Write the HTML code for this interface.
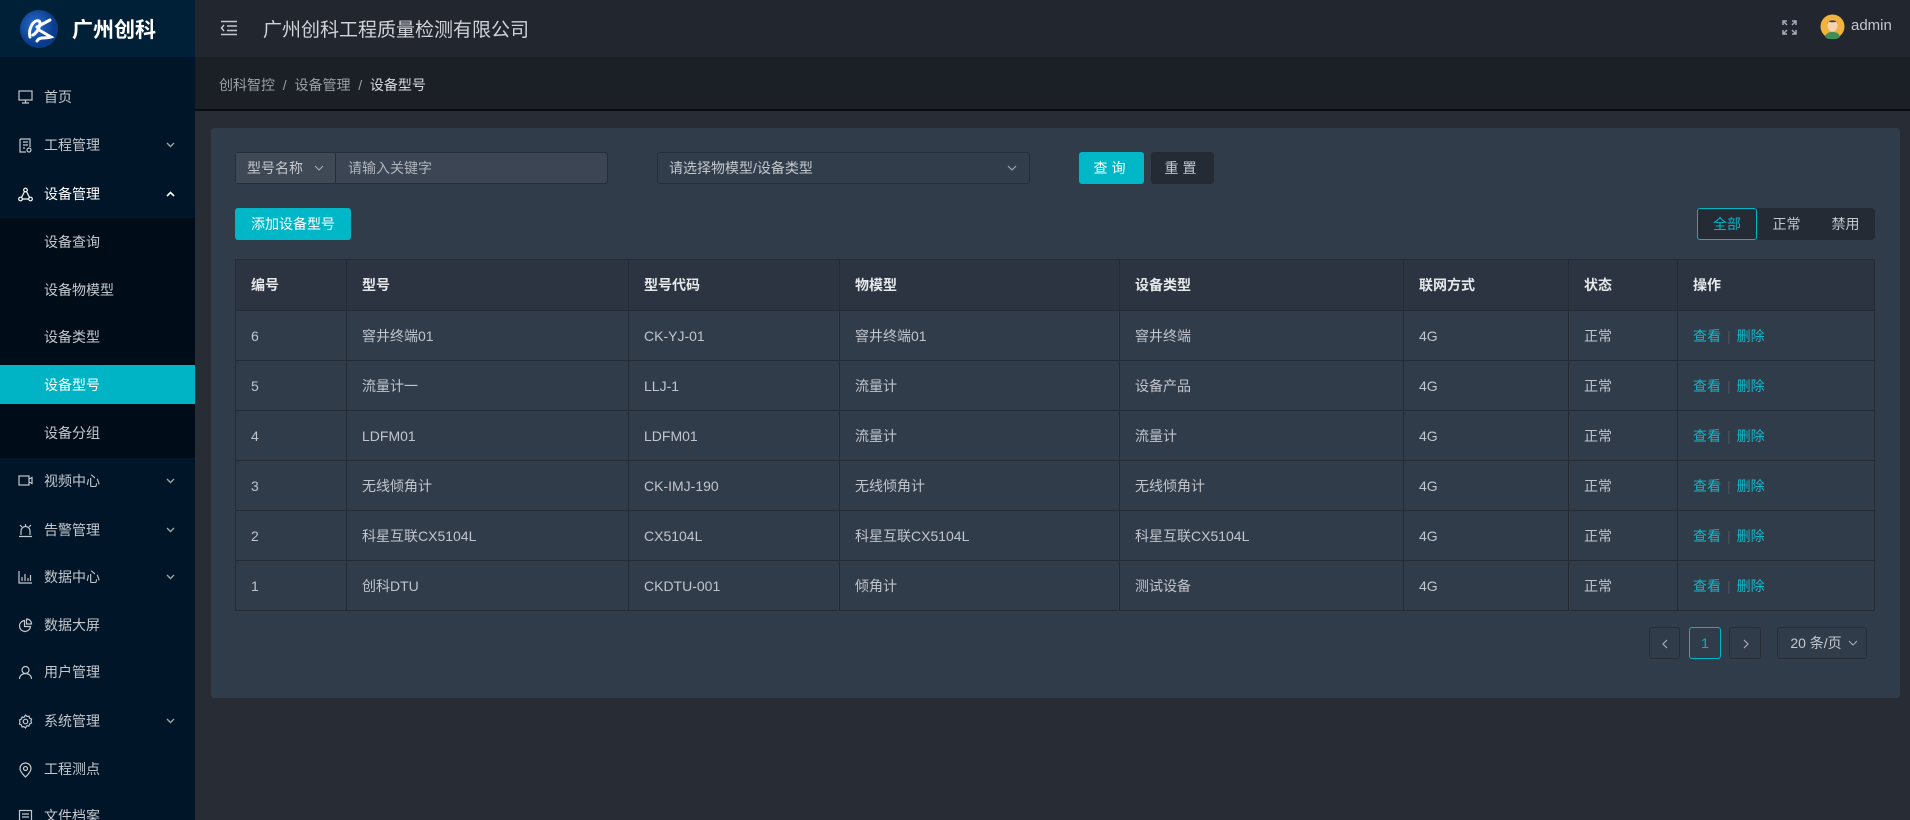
<!DOCTYPE html>
<html><head><meta charset="utf-8"><style>
*{box-sizing:border-box;margin:0;padding:0}
html{width:1910px;height:820px;overflow:hidden}
body{width:1910px;height:820px;overflow:hidden;background:#272c35;font-family:"Liberation Sans","Noto Sans CJK SC",sans-serif;color:#c0c4cc;position:relative}
.abs{position:absolute}
#side{left:0;top:0;width:195px;height:820px;background:#001527;overflow:hidden}
#logo{left:0;top:0;width:195px;height:57px;background:#002038}
.mi{position:absolute;left:0;width:195px;height:48px;line-height:48px;font-size:14px;color:#c4c8ce}
.mi .t{position:absolute;left:44px}
.mi svg{position:absolute;left:18px;top:17px}
.mi svg.ar{left:166px;top:21px}
#sub{left:0;top:218px;width:195px;height:240px;background:#000c17}
#hdr{left:195px;top:0;width:1715px;height:57px;background:#21262f}
#bc{left:195px;top:57px;width:1715px;height:54px;background:#1b1f26;border-bottom:2px solid #0a0c10}
#card{left:211px;top:128px;width:1689px;height:570px;background:#313c4a;border-radius:3px}
table{border-collapse:collapse;position:absolute;left:235px;top:259px;width:1640px;font-size:14px}
td,th{border:1px solid #242b35;padding-left:15px;text-align:left;height:50px}
th{background:#2b3440;color:#e6e8eb;font-weight:bold;height:51px}
td{color:#c0c4cc}
.op{color:#12b7c9}
.sep{color:#4a5260;margin:0 6px}
.btn{position:absolute;border-radius:3px;text-align:center;font-size:14px}
</style></head><body>
<div id="side" class="abs">
<div id="logo" class="abs">
<svg class="abs" style="left:20px;top:10px" width="38" height="38" viewBox="0 0 38 38"><defs><radialGradient id="g" cx="40%" cy="40%"><stop offset="0" stop-color="#2a6fd0"/><stop offset="1" stop-color="#0b3c8c"/></radialGradient></defs><circle cx="19" cy="19" r="19" fill="url(#g)"/><path d="M10 27 C8 18 14 9 19 11 C22 13 18 22 13 25 M17 17 L30 10 M19 20 L31 27 C25 29 20 26 17 31" stroke="#fff" stroke-width="3" fill="none" stroke-linecap="round"/></svg>
<div class="abs" style="left:72px;top:14px;font-size:21px;font-weight:bold;color:#fff">广州创科</div>
</div>
<div id="sub" class="abs"></div>
<div class="abs" style="left:0;top:365px;width:195px;height:39px;background:#00b4c6"></div>
<div class="mi" style="top:73px"><svg width="15" height="14" viewBox="0 0 15 14" fill="none" stroke="#c4c8ce" stroke-width="1.2"><rect x="1" y="1" width="13" height="9"/><path d="M7.5 10v3M4 13h7"/></svg><span class="t">首页</span></div>
<div class="mi" style="top:121px"><svg width="15" height="15" viewBox="0 0 15 15" fill="none" stroke="#c4c8ce" stroke-width="1.2"><path d="M2 1h10v8M2 1v13h6M5 4h5M5 7h5M5 10h2"/><circle cx="11" cy="12" r="2"/></svg><span class="t">工程管理</span><svg class="ar" width="9" height="6" viewBox="0 0 9 6" fill="none" stroke="#9aa" stroke-width="1.4"><path d="M1 1l3.5 3.5L8 1"/></svg></div>
<div class="mi" style="top:170px;color:#fff"><svg width="15" height="15" viewBox="0 0 15 15" fill="none" stroke="#fff" stroke-width="1.2"><circle cx="7.5" cy="3" r="1.8"/><circle cx="2.5" cy="12" r="1.8"/><circle cx="12.5" cy="12" r="1.8"/><path d="M6.5 4.5 3.5 10.5M8.5 4.5l3 6M4.3 12h6.4"/></svg><span class="t">设备管理</span><svg class="ar" width="9" height="6" viewBox="0 0 9 6" fill="none" stroke="#fff" stroke-width="1.6"><path d="M1 5l3.5-3.5L8 5"/></svg></div>
<div class="mi" style="top:218px"><span class="t">设备查询</span></div>
<div class="mi" style="top:266px"><span class="t">设备物模型</span></div>
<div class="mi" style="top:313px"><span class="t">设备类型</span></div>
<div class="mi" style="top:361px;color:#fff"><span class="t">设备型号</span></div>
<div class="mi" style="top:409px"><span class="t">设备分组</span></div>
<div class="mi" style="top:457px"><svg width="15" height="13" viewBox="0 0 15 13" fill="none" stroke="#c4c8ce" stroke-width="1.2"><rect x="1" y="2" width="10" height="9"/><path d="M11 5l3-1.5v6L11 8"/></svg><span class="t">视频中心</span><svg class="ar" width="9" height="6" viewBox="0 0 9 6" fill="none" stroke="#9aa" stroke-width="1.4"><path d="M1 1l3.5 3.5L8 1"/></svg></div>
<div class="mi" style="top:506px"><svg width="15" height="15" viewBox="0 0 15 15" fill="none" stroke="#c4c8ce" stroke-width="1.2"><path d="M3 12V8a4.5 4.5 0 0 1 9 0v4M1 13.5h13M2 2l2 2M13 2l-2 2M7.5 1v2"/></svg><span class="t">告警管理</span><svg class="ar" width="9" height="6" viewBox="0 0 9 6" fill="none" stroke="#9aa" stroke-width="1.4"><path d="M1 1l3.5 3.5L8 1"/></svg></div>
<div class="mi" style="top:553px"><svg width="15" height="14" viewBox="0 0 15 14" fill="none" stroke="#c4c8ce" stroke-width="1.2"><path d="M1 1v12h13M4 11V7M7 11V4M10 11V8M12.5 11V5"/></svg><span class="t">数据中心</span><svg class="ar" width="9" height="6" viewBox="0 0 9 6" fill="none" stroke="#9aa" stroke-width="1.4"><path d="M1 1l3.5 3.5L8 1"/></svg></div>
<div class="mi" style="top:601px"><svg width="15" height="15" viewBox="0 0 15 15" fill="none" stroke="#c4c8ce" stroke-width="1.2"><path d="M6.5 2.5A5.5 5.5 0 1 0 12.5 8.5H6.5z"/><path d="M8.5 1v5h5A5 5 0 0 0 8.5 1z"/></svg><span class="t">数据大屏</span></div>
<div class="mi" style="top:648px"><svg width="15" height="15" viewBox="0 0 15 15" fill="none" stroke="#c4c8ce" stroke-width="1.2"><circle cx="7.5" cy="5" r="3.5"/><path d="M1.5 14c0-3.5 3-5.5 6-5.5s6 2 6 5.5"/></svg><span class="t">用户管理</span></div>
<div class="mi" style="top:697px"><svg width="15" height="15" viewBox="0 0 15 15" fill="none" stroke="#c4c8ce" stroke-width="1.2"><path d="M7.5 1l1.5 1.5 2-.3.6 2 1.9.9-.5 2 .5 2-1.9.9-.6 2-2-.3L7.5 14 6 12.6l-2 .3-.6-2-1.9-.9.5-2-.5-2 1.9-.9.6-2 2 .3z"/><circle cx="7.5" cy="7.5" r="2.3"/></svg><span class="t">系统管理</span><svg class="ar" width="9" height="6" viewBox="0 0 9 6" fill="none" stroke="#9aa" stroke-width="1.4"><path d="M1 1l3.5 3.5L8 1"/></svg></div>
<div class="mi" style="top:745px"><svg width="15" height="16" viewBox="0 0 15 16" fill="none" stroke="#c4c8ce" stroke-width="1.2"><path d="M7.5 15S2 10 2 6.5a5.5 5.5 0 0 1 11 0C13 10 7.5 15 7.5 15z"/><circle cx="7.5" cy="6.5" r="2"/></svg><span class="t">工程测点</span></div>
<div class="mi" style="top:792px"><svg width="15" height="15" viewBox="0 0 15 15" fill="none" stroke="#c4c8ce" stroke-width="1.2"><rect x="1.5" y="1.5" width="12" height="12"/><path d="M4 5h7M4 8h7"/></svg><span class="t">文件档案</span></div>
</div>

<div id="hdr" class="abs">
<svg class="abs" style="left:25px;top:20px" width="18" height="16" viewBox="0 0 18 16" fill="none" stroke="#c4c8ce" stroke-width="1.5"><path d="M1 1.5h16M7 6h10M7 10.5h10M1 14.5h16M4 5L1.5 8 4 11"/></svg>
<div class="abs" style="left:68px;top:15px;font-size:19px;color:#d0d3d8">广州创科工程质量检测有限公司</div>
<svg class="abs" style="left:1587px;top:20px" width="15" height="15" viewBox="0 0 15 15" fill="none" stroke="#aab" stroke-width="1.5"><path d="M1 5V1h4M1 1l4 4M14 5V1h-4M14 1l-4 4M1 10v4h4M1 14l4-4M14 10v4h-4M14 14l-4-4"/></svg>
<svg class="abs" style="left:1625px;top:14px" width="25" height="25" viewBox="0 0 25 25"><circle cx="12.5" cy="12.5" r="12" fill="#f2b33d"/><path d="M5 23c1-4 4-5 7.5-5s6.5 1 7.5 5a12 12 0 0 1-15 0z" fill="#3f8f5a"/><ellipse cx="12.5" cy="11.5" rx="5" ry="6" fill="#f6d3b0"/><path d="M7.5 10c0-5 10-5 10 0l-1-2.5c-2 1-6 1-8 0z" fill="#5a3a24"/></svg>
<div class="abs" style="left:1656px;top:17px;font-size:15px;color:#c4c8ce">admin</div>
</div>
<div id="bc" class="abs"><div class="abs" style="left:24px;top:18px;font-size:14px;color:#9aa0a8">创科智控 &nbsp;/&nbsp; 设备管理 &nbsp;/&nbsp; <span style="color:#d6d9de">设备型号</span></div></div>

<div id="card" class="abs"></div>
<div class="abs" style="left:235px;top:152px;width:373px;height:32px;border:1px solid #262d37;border-radius:3px;background:#3b4553"></div>
<div class="abs" style="left:236px;top:153px;width:100px;height:30px;background:#3f4855;border-right:1px solid #262d37;font-size:14px;line-height:30px;padding-left:11px;color:#c4c8ce">型号名称<svg style="position:absolute;left:78px;top:12px" width="10" height="6" viewBox="0 0 10 6" fill="none" stroke="#aab" stroke-width="1.1"><path d="M1 1l4 4 4-4"/></svg></div>
<div class="abs" style="left:348px;top:153px;font-size:14px;line-height:30px;color:#b0b5bc">请输入关键字</div>
<div class="abs" style="left:657px;top:152px;width:373px;height:32px;border:1px solid #262d37;border-radius:3px;background:#323d4b;font-size:14px;line-height:30px;padding-left:11px;color:#c4c8ce">请选择物模型/设备类型<svg style="position:absolute;right:12px;top:12px" width="10" height="6" viewBox="0 0 10 6" fill="none" stroke="#aab" stroke-width="1.1"><path d="M1 1l4 4 4-4"/></svg></div>
<div class="btn" style="left:1079px;top:152px;width:65px;height:32px;line-height:32px;background:#00b7c8;color:#fff;letter-spacing:4px">查询</div>
<div class="btn" style="left:1151px;top:152px;width:63px;height:32px;line-height:32px;background:#252b35;color:#c4c8ce;letter-spacing:4px">重置</div>
<div class="btn" style="left:235px;top:208px;width:116px;height:32px;line-height:32px;background:#00b7c8;color:#fff">添加设备型号</div>
<div class="btn" style="left:1697px;top:208px;width:178px;height:32px;background:#252b35"></div>
<div class="btn" style="left:1697px;top:208px;width:60px;height:32px;line-height:30px;border:1px solid #00b7c8;color:#00b7c8">全部</div>
<div class="btn" style="left:1757px;top:208px;width:59px;height:32px;line-height:32px;color:#c4c8ce">正常</div>
<div class="btn" style="left:1816px;top:208px;width:59px;height:32px;line-height:32px;color:#c4c8ce">禁用</div>

<table>
<colgroup><col style="width:111px"><col style="width:282px"><col style="width:211px"><col style="width:280px"><col style="width:284px"><col style="width:165px"><col style="width:109px"><col></colgroup>
<tr><th>编号</th><th>型号</th><th>型号代码</th><th>物模型</th><th>设备类型</th><th>联网方式</th><th>状态</th><th>操作</th></tr>
<tr><td>6</td><td>窨井终端01</td><td>CK-YJ-01</td><td>窨井终端01</td><td>窨井终端</td><td>4G</td><td>正常</td><td><span class="op">查看</span><span class="sep">|</span><span class="op">删除</span></td></tr>
<tr><td>5</td><td>流量计一</td><td>LLJ-1</td><td>流量计</td><td>设备产品</td><td>4G</td><td>正常</td><td><span class="op">查看</span><span class="sep">|</span><span class="op">删除</span></td></tr>
<tr><td>4</td><td>LDFM01</td><td>LDFM01</td><td>流量计</td><td>流量计</td><td>4G</td><td>正常</td><td><span class="op">查看</span><span class="sep">|</span><span class="op">删除</span></td></tr>
<tr><td>3</td><td>无线倾角计</td><td>CK-IMJ-190</td><td>无线倾角计</td><td>无线倾角计</td><td>4G</td><td>正常</td><td><span class="op">查看</span><span class="sep">|</span><span class="op">删除</span></td></tr>
<tr><td>2</td><td>科星互联CX5104L</td><td>CX5104L</td><td>科星互联CX5104L</td><td>科星互联CX5104L</td><td>4G</td><td>正常</td><td><span class="op">查看</span><span class="sep">|</span><span class="op">删除</span></td></tr>
<tr><td>1</td><td>创科DTU</td><td>CKDTU-001</td><td>倾角计</td><td>测试设备</td><td>4G</td><td>正常</td><td><span class="op">查看</span><span class="sep">|</span><span class="op">删除</span></td></tr>
</table>

<div class="btn" style="left:1649px;top:627px;width:31px;height:32px;border:1px solid #272e38"><svg style="position:absolute;left:12px;top:11px" width="6" height="10" viewBox="0 0 6 10" fill="none" stroke="#aab" stroke-width="1.2"><path d="M5 1L1 5l4 4"/></svg></div>
<div class="btn" style="left:1689px;top:627px;width:32px;height:32px;line-height:30px;border:1px solid #00b7c8;color:#00b7c8">1</div>
<div class="btn" style="left:1729px;top:627px;width:32px;height:32px;border:1px solid #272e38"><svg style="position:absolute;left:13px;top:11px" width="6" height="10" viewBox="0 0 6 10" fill="none" stroke="#aab" stroke-width="1.2"><path d="M1 1l4 4-4 4"/></svg></div>
<div class="btn" style="left:1777px;top:627px;width:90px;height:32px;line-height:30px;border:1px solid #272e38;color:#c4c8ce;padding-right:12px">20 条/页<svg style="position:absolute;right:8px;top:12px" width="10" height="6" viewBox="0 0 10 6" fill="none" stroke="#aab" stroke-width="1.1"><path d="M1 1l4 4 4-4"/></svg></div>
</body></html>
